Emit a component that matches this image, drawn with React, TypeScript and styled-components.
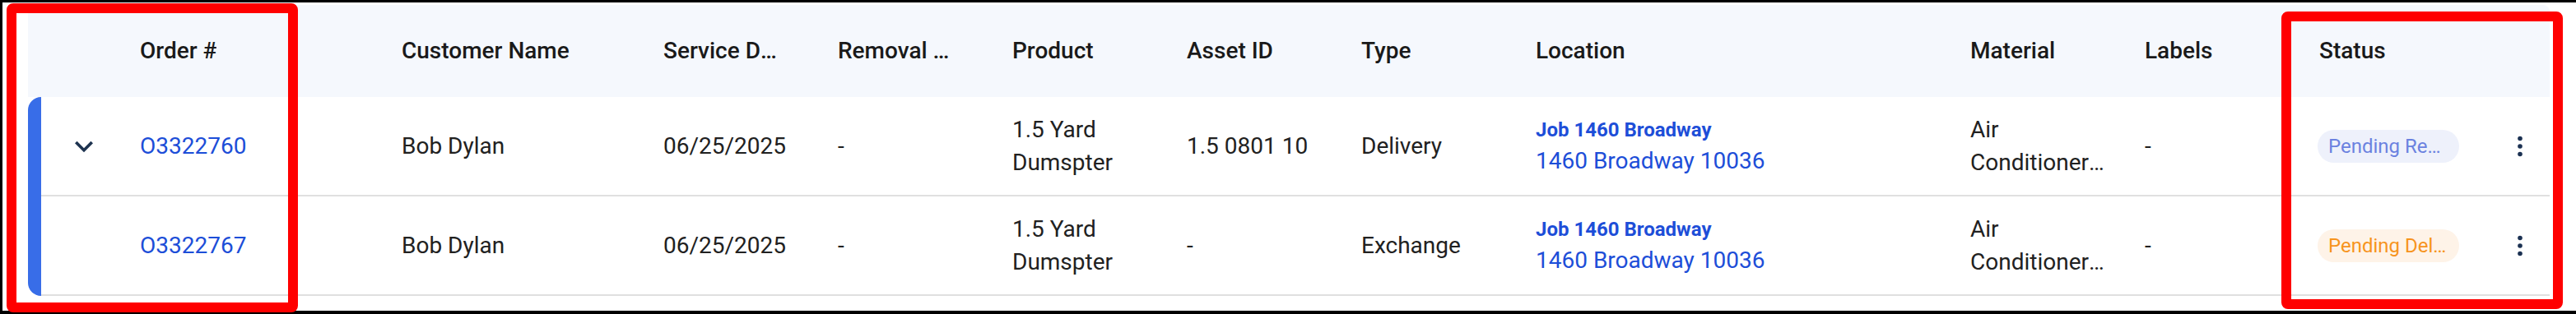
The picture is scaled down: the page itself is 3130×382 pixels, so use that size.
import styled, { createGlobalStyle } from 'styled-components'

const GlobalStyle = createGlobalStyle`
  body {
    margin: 0;
    background: #fff;
    font-family: Roboto, 'Liberation Sans', sans-serif;
  }
`

const COLUMNS = '318px 318px 212px 212px 212px 212px 212px 528px 212px 212px 1fr 72px'

type Tone = 'blue' | 'orange'

interface Order {
  id: string
  customer: string
  serviceDate: string
  removalDate: string
  product: string
  assetId: string
  type: string
  jobName: string
  address: string
  material: string
  labels: string
  status: string
  tone: Tone
  expandable: boolean
}

const orders: Order[] = [
  {
    id: 'O3322760',
    customer: 'Bob Dylan',
    serviceDate: '06/25/2025',
    removalDate: '-',
    product: '1.5 Yard Dumspter',
    assetId: '1.5 0801 10',
    type: 'Delivery',
    jobName: 'Job 1460 Broadway',
    address: '1460 Broadway 10036',
    material: 'Air Conditioner Units',
    labels: '-',
    status: 'Pending Removal',
    tone: 'blue',
    expandable: true,
  },
  {
    id: 'O3322767',
    customer: 'Bob Dylan',
    serviceDate: '06/25/2025',
    removalDate: '-',
    product: '1.5 Yard Dumspter',
    assetId: '-',
    type: 'Exchange',
    jobName: 'Job 1460 Broadway',
    address: '1460 Broadway 10036',
    material: 'Air Conditioner Units',
    labels: '-',
    status: 'Pending Delivery',
    tone: 'orange',
    expandable: false,
  },
]

const headers = [
  'Order #',
  'Customer Name',
  'Service Date',
  'Removal Date',
  'Product',
  'Asset ID',
  'Type',
  'Location',
  'Material',
  'Labels',
  'Status',
]

function App() {
  return (
    <>
      <GlobalStyle />
      <Frame>
        <Table>
          <HeaderRow>
            <HeaderCell />
            {headers.map((title) => (
              <HeaderCell key={title}>
                <HeaderTitle>{title}</HeaderTitle>
              </HeaderCell>
            ))}
            <HeaderCell />
          </HeaderRow>
          <Group>
            <AccentBar />
            <GroupRows>
              {orders.map((order) => (
                <Row key={order.id}>
                  <ExpandCell>
                    {order.expandable && (
                      <svg width="44" height="44" viewBox="0 0 24 24">
                        <path d="M16.59 8.59 12 13.17 7.41 8.59 6 10l6 6 6-6z" fill="#1e3350" />
                      </svg>
                    )}
                  </ExpandCell>
                  <Cell>
                    <OrderLink href="#">{order.id}</OrderLink>
                  </Cell>
                  <Cell>{order.customer}</Cell>
                  <Cell>{order.serviceDate}</Cell>
                  <Cell>{order.removalDate}</Cell>
                  <Cell>{order.product}</Cell>
                  <Cell>{order.assetId}</Cell>
                  <Cell>{order.type}</Cell>
                  <Cell>
                    <LocationStack>
                      <JobName>{order.jobName}</JobName>
                      <Address>{order.address}</Address>
                    </LocationStack>
                  </Cell>
                  <Cell>
                    <Clamp>{order.material}</Clamp>
                  </Cell>
                  <Cell>{order.labels}</Cell>
                  <StatusCell>
                    <StatusPill $tone={order.tone}>{order.status}</StatusPill>
                  </StatusCell>
                  <ActionCell>
                    <svg width="8" height="28" viewBox="0 0 8 28">
                      <circle cx="4" cy="4.5" r="2.8" fill="#1b3152" />
                      <circle cx="4" cy="14" r="2.8" fill="#1b3152" />
                      <circle cx="4" cy="23.5" r="2.8" fill="#1b3152" />
                    </svg>
                  </ActionCell>
                </Row>
              ))}
            </GroupRows>
          </Group>
        </Table>
        <Highlight $left={5} $top={1} $width={354} $height={376} />
        <Highlight $left={2769} $top={11} $width={342} $height={362} />
      </Frame>
    </>
  )
}

export default App

const Frame = styled.div`
  position: relative;
  box-sizing: border-box;
  width: 3130px;
  height: 382px;
  border: 3px solid #000;
  border-right: 0;
  border-bottom-width: 4px;
  padding: 3px 0 0 31px;
  background: #fff;
`

const Table = styled.div`
  width: 3064px;
  font-size: 28px;
  line-height: 40px;
  color: #212121;
`

const HeaderRow = styled.div`
  display: grid;
  grid-template-columns: 120px ${COLUMNS};
  height: 112px;
  background: #f5f8fd;
  border-radius: 8px 8px 0 0;
`

const HeaderCell = styled.div`
  display: flex;
  align-items: center;
  min-width: 0;
  padding: 0 16px;
  font-weight: 500;
  color: #1a1a1a;
`

const HeaderTitle = styled.span`
  max-width: calc(100% - 40px);
  overflow: hidden;
  white-space: nowrap;
  text-overflow: ellipsis;
`

const Group = styled.div`
  display: flex;
`

const AccentBar = styled.div`
  flex: none;
  width: 16px;
  background: #386de8;
  border-radius: 16px 0 0 16px;
`

const GroupRows = styled.div`
  flex: 1;
  min-width: 0;
`

const Row = styled.div`
  display: grid;
  grid-template-columns: 104px ${COLUMNS};
  box-sizing: border-box;
  height: 121px;
  border-bottom: 2px solid #e0e0e0;
`

const Cell = styled.div`
  display: flex;
  align-items: center;
  min-width: 0;
  padding: 0 16px;
`

const ExpandCell = styled(Cell)`
  justify-content: center;
  padding: 0;
`

const StatusCell = styled(Cell)`
  padding-left: 14px;
`

const ActionCell = styled(Cell)`
  justify-content: center;
  padding: 0;
`

const OrderLink = styled.a`
  color: #1d4ed8;
  text-decoration: none;
`

const LocationStack = styled.div`
  display: flex;
  flex-direction: column;
  color: #1d4ed8;
`

const JobName = styled.span`
  font-size: 24px;
  line-height: 36px;
  font-weight: 700;
`

const Address = styled.span`
  line-height: 40px;
`

const Clamp = styled.span`
  display: -webkit-box;
  -webkit-box-orient: vertical;
  -webkit-line-clamp: 2;
  overflow: hidden;
`

const StatusPill = styled.span<{ $tone: Tone }>`
  box-sizing: border-box;
  display: inline-block;
  max-width: 172px;
  height: 40px;
  padding: 0 13px;
  border-radius: 20px;
  font-size: 24px;
  line-height: 40px;
  white-space: nowrap;
  overflow: hidden;
  text-overflow: ellipsis;
  color: ${(p) => (p.$tone === 'blue' ? '#6b82e0' : '#f7941d')};
  background: ${(p) => (p.$tone === 'blue' ? '#eef1fb' : '#fef3e8')};
`

const Highlight = styled.div<{ $left: number; $top: number; $width: number; $height: number }>`
  position: absolute;
  left: ${(p) => p.$left}px;
  top: ${(p) => p.$top}px;
  width: ${(p) => p.$width}px;
  height: ${(p) => p.$height}px;
  box-sizing: border-box;
  border: 12px solid #ff0000;
  border-radius: 8px;
  pointer-events: none;
`
